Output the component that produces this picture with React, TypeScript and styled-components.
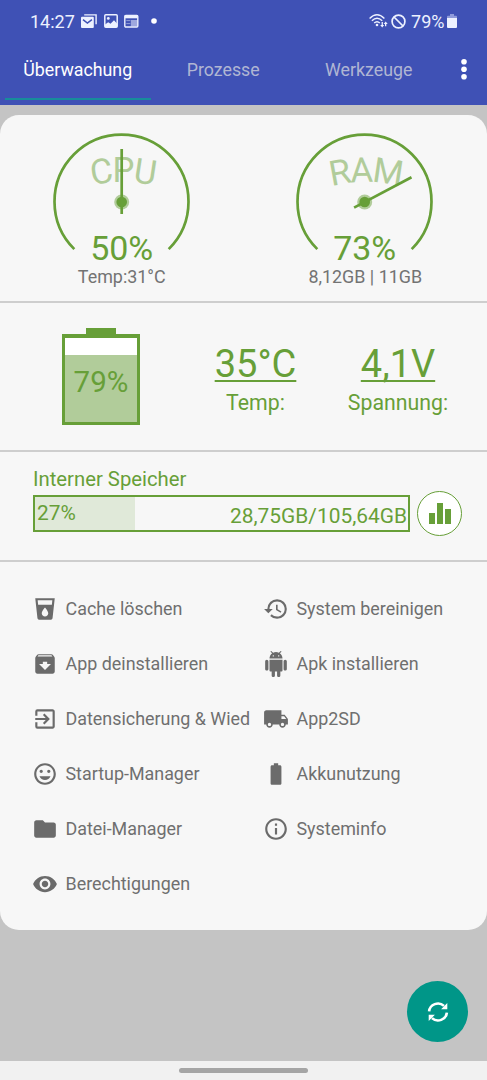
import React from 'react';
import styled, { createGlobalStyle } from 'styled-components';
import {
  MdBatteryFull,
  MdExitToApp,
  MdFolder,
  MdHistory,
  MdInfoOutline,
  MdLocalDrink,
  MdVisibility,
} from 'react-icons/md';

const green = '#679f38';

const GlobalStyle = createGlobalStyle`
  * { box-sizing: border-box; }
  body {
    margin: 0;
    background: #c4c4c4;
    font-family: Roboto, "Liberation Sans", sans-serif;
  }
`;

const Screen = styled.div`
  width: 487px;
  height: 1080px;
  display: flex;
  flex-direction: column;
  position: relative;
  overflow: hidden;
  background: #c4c4c4;
`;

const Header = styled.header`
  height: 104.5px;
  background: #3f51b5;
  color: #fff;
`;

const StatusBar = styled.div`
  height: 42px;
  padding: 0 30px 0 30px;
  display: flex;
  align-items: center;
  justify-content: space-between;
  font-size: 18px;
  color: #edf1ff;
`;

const StatusGroup = styled.div<{ $gap: number }>`
  display: flex;
  align-items: center;
  gap: ${(p) => p.$gap}px;
`;

const StatusPercent = styled.span`
  margin-left: 3px;
`;

const TabBar = styled.nav`
  display: flex;
  height: 58px;
  padding-left: 5px;
`;

const Tab = styled.div<{ $active?: boolean }>`
  width: 145.5px;
  padding-top: 17px;
  line-height: 22px;
  font-size: 17.8px;
  text-align: center;
  color: ${(p) => (p.$active ? '#fff' : '#b0b6d3')};
  border-bottom: 2.5px solid ${(p) => (p.$active ? '#178c9b' : 'transparent')};
`;

const MenuButton = styled.div`
  flex: 1;
  padding: 16px 0 0 18.5px;
`;

const Card = styled.main`
  margin-top: 10.5px;
  height: 815px;
  border-radius: 19px;
  background: #f7f7f7;
  overflow: hidden;
`;

const Section = styled.section<{ $height: number }>`
  height: ${(p) => p.$height}px;
  border-bottom: 2px solid #cecece;
`;

const Gauges = styled(Section)`
  display: grid;
  grid-template-columns: 1fr 1fr;
  padding-top: 12px;
`;

const GaugeCell = styled.div`
  display: flex;
  flex-direction: column;
  align-items: center;
`;

const GaugeDial = styled.svg`
  overflow: visible;
  font-family: Roboto, "Liberation Sans", sans-serif;
  text-anchor: middle;
`;

const GaugeLabel = styled.div`
  font-size: 17.9px;
  line-height: 22px;
  color: #737373;
`;

const BatterySection = styled(Section)`
  display: grid;
  grid-template-columns: 202px 107px 178px;
  color: ${green};
`;

const Battery = styled.div`
  display: flex;
  flex-direction: column;
  align-items: center;
  padding-top: 25px;
`;

const BatteryTip = styled.div`
  width: 30px;
  height: 6px;
  background: ${green};
`;

const BatteryBody = styled.div`
  width: 78px;
  height: 91px;
  border: 3px solid ${green};
  border-top-width: 4px;
  background: #fff;
  display: flex;
  align-items: flex-end;
`;

const BatteryFill = styled.div`
  width: 100%;
  height: 67px;
  padding-top: 10px;
  background: #b1cc9a;
  font-size: 29.5px;
  line-height: 34px;
  text-align: center;
`;

const Stat = styled.div`
  display: flex;
  flex-direction: column;
  align-items: center;
  gap: 4px;
  padding-top: 38.5px;
  white-space: nowrap;
`;

const StatValue = styled.div`
  font-size: 38px;
  line-height: 44px;
  text-decoration: underline;
  text-decoration-thickness: 2px;
  text-underline-offset: 3px;
  text-decoration-skip-ink: none;
`;

const StatLabel = styled.div`
  font-size: 21.3px;
  line-height: 26px;
`;

const StorageSection = styled(Section)`
  padding: 14px 25px 0 33px;
  color: ${green};
`;

const StorageTitle = styled.div`
  font-size: 20.3px;
  line-height: 26px;
`;

const StorageRow = styled.div`
  display: flex;
  align-items: center;
  gap: 7px;
  margin-top: -1px;
`;

const StorageBar = styled.div`
  width: 377px;
  height: 37px;
  border: 2px solid ${green};
  display: flex;
  justify-content: space-between;
  font-size: 20.9px;
`;

const StorageUsed = styled.div`
  width: 100px;
  padding-left: 2px;
  line-height: 32px;
  background: #e0e9d9;
`;

const StorageTotal = styled.div`
  line-height: 38px;
  padding-right: 1px;
`;

const ChartButton = styled.div`
  width: 45px;
  height: 45px;
  border: 1px solid ${green};
  border-radius: 50%;
  background: #fff;
  display: flex;
  align-items: flex-end;
  justify-content: center;
  gap: 2px;
  padding-bottom: 11px;
`;

const ChartBar = styled.i<{ $height: number }>`
  width: 6px;
  height: ${(p) => p.$height}px;
  background: ${green};
`;

const Tools = styled.section`
  display: grid;
  grid-template-columns: 217px 180px;
  column-gap: 14px;
  grid-auto-rows: 55px;
  padding: 19px 0 0 32px;
`;

const Tool = styled.div`
  display: flex;
  align-items: center;
  gap: 7.5px;
  color: #6f6f6f;
  font-size: 17.9px;
  white-space: nowrap;
  svg { flex: none; color: #6b6b6b; }
`;

const RefreshButton = styled.div`
  position: absolute;
  right: 19px;
  bottom: 38px;
  width: 61px;
  height: 61px;
  border-radius: 50%;
  background: #009688;
  display: flex;
  align-items: center;
  justify-content: center;
`;

const NavigationBar = styled.footer`
  margin-top: auto;
  height: 19px;
  background: #f1f1f1;
  display: flex;
  justify-content: center;
  padding-top: 7px;
`;

const Handle = styled.div`
  width: 129px;
  height: 5px;
  border-radius: 3px;
  background: #a5a5a5;
`;

function MailIcon() {
  return (
    <svg width="16" height="14" viewBox="0 0 16 14">
      <path d="M3.2 .9h11.9v9.4" fill="none" stroke="currentColor" strokeWidth="1.4" />
      <rect x="0" y="2.8" width="12.8" height="11.2" rx="1" fill="currentColor" />
      <path d="M2 5.6l4.4 3.4 4.5-3.4" fill="none" stroke="#3f51b5" strokeWidth="1.5" />
    </svg>
  );
}

function PictureIcon() {
  return (
    <svg width="14" height="14" viewBox="0 0 14 14">
      <rect x="0.8" y="0.8" width="12.4" height="12.4" rx="1" fill="none" stroke="currentColor" strokeWidth="1.5" />
      <path d="M1 10.5l3.2-2.3 2.3 1.6L10 6.3l3 3.2V13H1z" fill="currentColor" />
      <circle cx="4.3" cy="4.4" r="1.4" fill="currentColor" />
    </svg>
  );
}

function NewsIcon() {
  return (
    <svg width="15" height="14" viewBox="0 0 15 14">
      <rect x="0.8" y="1.4" width="13" height="11.6" rx="1" fill="none" stroke="currentColor" strokeWidth="1.4" />
      <path d="M.8 1h12.9v3.3H.8z" fill="currentColor" />
      <path d="M2.3 6.6h4M2.3 9.6h4" stroke="currentColor" strokeWidth="0.8" opacity="0.6" />
      <path d="M6.8 6h6.5v6.5H6.8z" fill="currentColor" opacity="0.55" />
    </svg>
  );
}

function WifiIcon() {
  return (
    <svg width="19" height="14" viewBox="0 0 19 14">
      <g fill="none" stroke="currentColor" strokeWidth="1.45">
        <path d="M.6 4.4Q8 -2.7 15.4 4.4" />
        <path d="M2.9 6.7Q8 1.8 13.2 6.7" />
        <path d="M5.2 9Q8 6.3 10.8 9" />
      </g>
      <circle cx="8" cy="11" r="1.3" fill="currentColor" />
      <path d="M12.6 8v3h-1.4l2 2.6 2-2.6h-1.3V8zM16 12.3V10h-1.3l2-2.5 2 2.5h-1.4v2.3z" fill="currentColor" />
    </svg>
  );
}

function BlockIcon() {
  return (
    <svg width="15" height="15" viewBox="0 0 15 15">
      <circle cx="7.5" cy="7.5" r="6.4" fill="none" stroke="currentColor" strokeWidth="1.7" />
      <path d="M3 3l9 9" stroke="currentColor" strokeWidth="1.7" />
    </svg>
  );
}

function StatusBatteryIcon() {
  return (
    <svg width="10" height="14" viewBox="0 0 10 14">
      <path d="M3 0h4v1.7h2q1 0 1 1V5H0V2.7q0-1 1-1h2z" fill="#8f9bdb" />
      <path d="M0 4h10v9q0 1-1 1H1q-1 0-1-1z" fill="currentColor" />
    </svg>
  );
}

interface IconProps {
  size: number;
}

function AndroidIcon({ size }: IconProps) {
  return (
    <svg width={size} height={size} viewBox="0 0 24 24" fill="currentColor">
      <path d="M6 18c0 .55.45 1 1 1h1v3.5c0 .83.67 1.5 1.5 1.5s1.5-.67 1.5-1.5V19h2v3.5c0 .83.67 1.5 1.5 1.5s1.5-.67 1.5-1.5V19h1c.55 0 1-.45 1-1V8H6v10zM3.5 8C2.67 8 2 8.67 2 9.5v7c0 .83.67 1.5 1.5 1.5S5 17.33 5 16.5v-7C5 8.67 4.33 8 3.5 8zm17 0c-.83 0-1.5.67-1.5 1.5v7c0 .83.67 1.5 1.5 1.5s1.5-.67 1.5-1.5v-7c0-.83-.67-1.5-1.5-1.5zm-4.97-5.84l1.3-1.3c.2-.2.2-.51 0-.71-.2-.2-.51-.2-.71 0l-1.48 1.48C13.85 1.23 12.95 1 12 1c-.96 0-1.86.23-2.66.63L7.85.15c-.2-.2-.51-.2-.71 0-.2.2-.2.51 0 .71l1.31 1.31C6.97 3.26 6 5.01 6 7h12c0-1.99-.97-3.75-2.47-4.84zM10 5H9V4h1v1zm5 0h-1V4h1v1z" />
    </svg>
  );
}

function ArchiveIcon({ size }: IconProps) {
  return (
    <svg width={size} height={size} viewBox="0 0 24 24" fill="currentColor">
      <path d="M20.54 5.23l-1.39-1.68C18.88 3.21 18.47 3 18 3H6c-.47 0-.88.21-1.16.55L3.46 5.23C3.17 5.57 3 6.02 3 6.5V19c0 1.1.9 2 2 2h14c1.1 0 2-.9 2-2V6.5c0-.48-.17-.93-.46-1.27zM12 17.5L6.5 12H10v-2h4v2h3.5L12 17.5zM5.12 5l.81-1h12l.94 1H5.12z" />
    </svg>
  );
}

function MoodIcon({ size }: IconProps) {
  return (
    <svg width={size} height={size} viewBox="0 0 24 24" fill="currentColor">
      <path d="M11.99 2C6.47 2 2 6.48 2 12s4.47 10 9.99 10C17.52 22 22 17.52 22 12S17.52 2 11.99 2zM12 20c-4.42 0-8-3.58-8-8s3.58-8 8-8 8 3.58 8 8-3.58 8-8 8zm3.5-9c.83 0 1.5-.67 1.5-1.5S16.33 8 15.5 8 14 8.67 14 9.5s.67 1.5 1.5 1.5zm-7 0c.83 0 1.5-.67 1.5-1.5S9.33 8 8.5 8 7 8.67 7 9.5 7.67 11 8.5 11zm3.5 6.5c2.33 0 4.31-1.46 5.11-3.5H6.89c.8 2.04 2.78 3.5 5.11 3.5z" />
    </svg>
  );
}

function TruckIcon({ size }: IconProps) {
  return (
    <svg width={size} height={size} viewBox="0 0 24 24" fill="currentColor">
      <path d="M20 8h-3V4H3c-1.1 0-2 .9-2 2v11h2c0 1.66 1.34 3 3 3s3-1.34 3-3h6c0 1.66 1.34 3 3 3s3-1.34 3-3h2v-5l-3-4zM6 18.5c-.83 0-1.5-.67-1.5-1.5s.67-1.5 1.5-1.5 1.5.67 1.5 1.5-.67 1.5-1.5 1.5zm13.5-9l1.96 2.5H17V9.5h2.5zm-1.5 9c-.83 0-1.5-.67-1.5-1.5s.67-1.5 1.5-1.5 1.5.67 1.5 1.5-.67 1.5-1.5 1.5z" />
    </svg>
  );
}

function RefreshIcon() {
  return (
    <svg width="22" height="22" viewBox="0 0 22 22">
      <g fill="none" stroke="#fff" strokeWidth="2.6">
        <path d="M2.1 10.4A8.9 8.7 0 0 1 17 4.9" />
        <path d="M19.9 11.6A8.9 8.7 0 0 1 5 17.1" />
      </g>
      <path d="M20.3 1.9v6.3h-6.2zM1.7 20.1v-6.3h6.2z" fill="#fff" />
    </svg>
  );
}

interface GaugeProps {
  id: string;
  name: string;
  percent: number;
  detail: string;
}

function Gauge({ id, name, percent, detail }: GaugeProps) {
  const angle = (percent / 100 - 0.5) * 270;
  return (
    <GaugeCell>
      <GaugeDial width="150" height="139" viewBox="0 0 150 139">
        <path id={id} d="M15 69.3A135 135 0 0 1 136 69.3" fill="none" />
        <path d="M27.3 122.1A67 67 0 1 1 121.7 122.1" fill="none" stroke={green} strokeWidth="2.7" />
        <text fontSize="34.7" fill="#b1cc9a" letterSpacing="-1.9">
          <textPath href={`#${id}`} startOffset="50%">{name}</textPath>
        </text>
        <circle cx="74.7" cy="75" r="7.5" fill="#b1cc9a" />
        <circle cx="74.7" cy="75" r="5.3" fill={green} />
        <path d="M74.7 22v65" stroke={green} strokeWidth="2.7" transform={`rotate(${angle} 74.7 75)`} />
        <text x="74.7" y="132.7" fontSize="34" fill={green}>{percent}%</text>
      </GaugeDial>
      <GaugeLabel>{detail}</GaugeLabel>
    </GaugeCell>
  );
}

const tools = [
  { icon: MdLocalDrink, label: 'Cache löschen' },
  { icon: MdHistory, label: 'System bereinigen' },
  { icon: ArchiveIcon, label: 'App deinstallieren' },
  { icon: AndroidIcon, label: 'Apk installieren' },
  { icon: MdExitToApp, label: 'Datensicherung & Wied' },
  { icon: TruckIcon, label: 'App2SD' },
  { icon: MoodIcon, label: 'Startup-Manager' },
  { icon: MdBatteryFull, label: 'Akkunutzung' },
  { icon: MdFolder, label: 'Datei-Manager' },
  { icon: MdInfoOutline, label: 'Systeminfo' },
  { icon: MdVisibility, label: 'Berechtigungen' },
];

export default function App() {
  return (
    <Screen>
      <GlobalStyle />
      <Header>
        <StatusBar>
          <StatusGroup $gap={6.5}>
            <span>14:27</span>
            <MailIcon />
            <PictureIcon />
            <NewsIcon />
            <svg width="16" height="6" viewBox="0 0 16 6">
              <circle cx="8" cy="3" r="2.8" fill="#fff" />
            </svg>
          </StatusGroup>
          <StatusGroup $gap={2.5}>
            <WifiIcon />
            <BlockIcon />
            <StatusPercent>79%</StatusPercent>
            <StatusBatteryIcon />
          </StatusGroup>
        </StatusBar>
        <TabBar>
          <Tab $active>Überwachung</Tab>
          <Tab>Prozesse</Tab>
          <Tab>Werkzeuge</Tab>
          <MenuButton>
            <svg width="8" height="24" viewBox="0 0 8 24" fill="#fff">
              <circle cx="4" cy="3.7" r="2.8" />
              <circle cx="4" cy="11.2" r="2.8" />
              <circle cx="4" cy="18.7" r="2.8" />
            </svg>
          </MenuButton>
        </TabBar>
      </Header>
      <Card>
        <Gauges $height={188}>
          <Gauge id="cpu-arc" name="CPU" percent={50} detail="Temp:31°C" />
          <Gauge id="ram-arc" name="RAM" percent={73} detail="8,12GB | 11GB" />
        </Gauges>
        <BatterySection $height={149}>
          <Battery>
            <BatteryTip />
            <BatteryBody>
              <BatteryFill>79%</BatteryFill>
            </BatteryBody>
          </Battery>
          <Stat>
            <StatValue>35°C</StatValue>
            <StatLabel>Temp:</StatLabel>
          </Stat>
          <Stat>
            <StatValue>4,1V</StatValue>
            <StatLabel>Spannung:</StatLabel>
          </Stat>
        </BatterySection>
        <StorageSection $height={110}>
          <StorageTitle>Interner Speicher</StorageTitle>
          <StorageRow>
            <StorageBar>
              <StorageUsed>27%</StorageUsed>
              <StorageTotal>28,75GB/105,64GB</StorageTotal>
            </StorageBar>
            <ChartButton>
              <ChartBar $height={11} />
              <ChartBar $height={21} />
              <ChartBar $height={15} />
            </ChartButton>
          </StorageRow>
        </StorageSection>
        <Tools>
          {tools.map(({ icon: Icon, label }) => (
            <Tool key={label}>
              <Icon size={26} />
              <span>{label}</span>
            </Tool>
          ))}
        </Tools>
      </Card>
      <RefreshButton>
        <RefreshIcon />
      </RefreshButton>
      <NavigationBar>
        <Handle />
      </NavigationBar>
    </Screen>
  );
}
